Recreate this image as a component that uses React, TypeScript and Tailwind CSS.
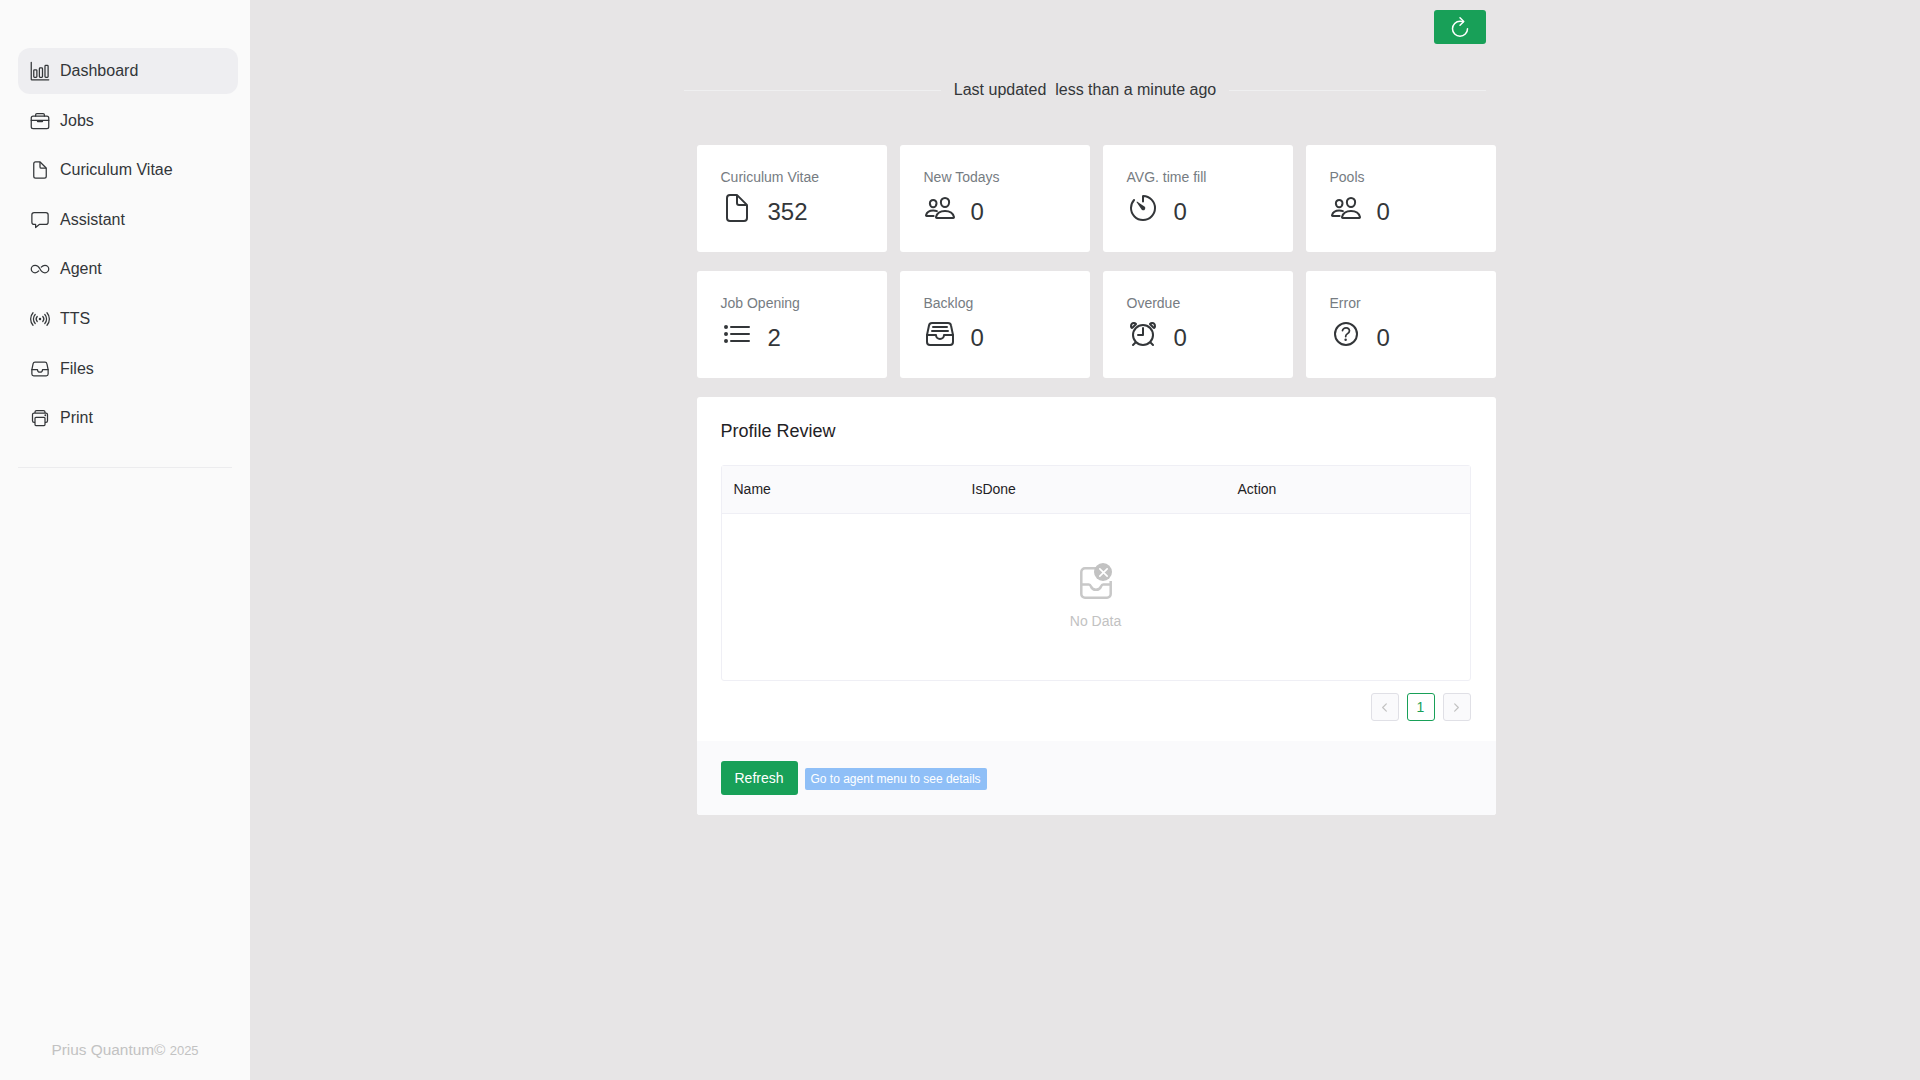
import React from "react";
import {
  IoBarChartOutline,
  IoBriefcaseOutline,
  IoDocumentOutline,
  IoChatboxOutline,
  IoInfiniteOutline,
  IoRadioOutline,
  IoFileTrayOutline,
  IoPrintOutline,
  IoPeopleOutline,
  IoTimerOutline,
  IoListOutline,
  IoFileTrayFullOutline,
  IoAlarmOutline,
  IoHelpCircleOutline,
  IoRefreshOutline,
  IoChevronBackOutline,
  IoChevronForwardOutline,
} from "react-icons/io5";

const nav = [
  { label: "Dashboard", Icon: IoBarChartOutline, active: true },
  { label: "Jobs", Icon: IoBriefcaseOutline },
  { label: "Curiculum Vitae", Icon: IoDocumentOutline },
  { label: "Assistant", Icon: IoChatboxOutline },
  { label: "Agent", Icon: IoInfiniteOutline },
  { label: "TTS", Icon: IoRadioOutline },
  { label: "Files", Icon: IoFileTrayOutline },
  { label: "Print", Icon: IoPrintOutline },
];

const stats = [
  { label: "Curiculum Vitae", value: "352", Icon: IoDocumentOutline },
  { label: "New Todays", value: "0", Icon: IoPeopleOutline },
  { label: "AVG. time fill", value: "0", Icon: IoTimerOutline },
  { label: "Pools", value: "0", Icon: IoPeopleOutline },
  { label: "Job Opening", value: "2", Icon: IoListOutline },
  { label: "Backlog", value: "0", Icon: IoFileTrayFullOutline },
  { label: "Overdue", value: "0", Icon: IoAlarmOutline },
  { label: "Error", value: "0", Icon: IoHelpCircleOutline },
];

export default function App() {
  return (
    <div className="flex h-[1080px] w-full overflow-hidden bg-[#e7e5e6] font-['Liberation_Sans',Arial,sans-serif] text-[#333639]">
      <aside className="flex h-full w-[250px] shrink-0 flex-col bg-[#fafafa] pl-[18px] pr-[12px] pt-[48px]">
        <nav className="flex flex-col gap-[3.6px] pr-0 w-[220px]">
          {nav.map(({ label, Icon, active }) => (
            <div
              key={label}
              className={`flex h-[46px] items-center gap-[10px] rounded-[12px] pl-[12px] text-[16px] ${active ? "bg-[#eeeef1]" : ""}`}
            >
              <Icon className="h-[20px] w-[20px] shrink-0" />
              <span>{label}</span>
            </div>
          ))}
        </nav>
        <div className="mt-[26px] h-px w-[214px] bg-[#ececee]" />
        <div className="mt-auto mb-[17px] -ml-[6px] text-center text-[15.4px] leading-[24px] text-[#c2c2c2]">
          Prius Quantum© <span className="text-[13px]">2025</span>
        </div>
      </aside>

      <main className="flex-1">
        <div className="mx-auto w-[802px]">
          <div className="flex justify-end pt-[10px]">
            <button className="flex h-[34px] w-[52px] items-center justify-center rounded-[3px] bg-[#18a058] text-white">
              <IoRefreshOutline className="h-[24px] w-[24px]" />
            </button>
          </div>
          <div className="mt-[34px] flex h-[24px] items-center">
            <div className="h-px flex-1 bg-[#efeff0]" />
            <div className="px-[13px] text-[16px] whitespace-pre">Last updated  less than a minute ago</div>
            <div className="h-px flex-1 bg-[#efeff0]" />
          </div>

          <div className="ml-[12.5px] mt-[43px] w-[799px]">
            <div className="grid grid-cols-4 gap-x-[13px] gap-y-[19px]">
              {stats.map(({ label, value, Icon }) => (
                <div key={label} className="h-[107px] rounded-[3px] bg-white px-[24px] pt-[22px]">
                  <div className="text-[14px] leading-[20px] text-[#767c82]">{label}</div>
                  <div className="mt-[7px] flex h-[36px] items-center">
                    <Icon className="mb-[8px] h-[32px] w-[32px] shrink-0" />
                    <span className="ml-[15px] text-[24px] leading-[36px]">{value}</span>
                  </div>
                </div>
              ))}
            </div>

            <div className="mt-[19px] rounded-[3px] bg-white">
              <div className="pl-[24px] pr-[25px] pt-[21px]">
                <h2 className="text-[18px] leading-[26px] text-[#1f2225]">Profile Review</h2>
                <div className="mt-[21px] rounded-[3px] border border-[#efeff5]">
                  <div className="grid h-[48px] grid-cols-[238px_266px_1fr] items-center border-b border-[#efeff5] bg-[#fafafc] px-[12px] text-[14px] text-[#1f2225]">
                    <span>Name</span>
                    <span>IsDone</span>
                    <span>Action</span>
                  </div>
                  <div className="flex h-[166px] flex-col items-center pt-[53px]">
                    <div className="relative h-[32px] w-[32px]">
                      <svg viewBox="0 0 32 32" className="h-[32px] w-[32px]" fill="none" stroke="#c8c8c8" strokeWidth="2.5">
                        <path d="M17 1.300H5a3.700 3.700 0 0 0-3.700 3.700v22a3.700 3.700 0 0 0 3.700 3.700h22a3.700 3.700 0 0 0 3.700-3.700V14" />
                        <path d="M1.300 17.500h7.500c1.200 0 1.700 0.800 2.200 2 0.700 2 2.400 3.300 5 3.300s4.300-1.300 5-3.300c0.500-1.200 1-2 2.200-2h7.500" />
                      </svg>
                      <div className="absolute left-[14.500px] top-[-4px] flex h-[18px] w-[18px] items-center justify-center rounded-full bg-[#c2c2c2]">
                        <svg viewBox="0 0 12 12" className="h-[11px] w-[11px]" stroke="#fff" strokeWidth="1.800" strokeLinecap="round">
                          <path d="M2 2l8 8M10 2l-8 8" />
                        </svg>
                      </div>
                    </div>
                    <div className="mt-[12px] text-[14px] leading-[20px] text-[#c2c2c2]">No Data</div>
                  </div>
                </div>
                <div className="flex justify-end gap-[8px] pt-[12px] pb-[20px]">
                  <div className="flex h-[28px] w-[28px] items-center justify-center rounded-[3px] border border-[#e0e0e6] bg-[#fafafc] text-[#c2c2c2]">
                    <IoChevronBackOutline className="h-[13px] w-[13px]" />
                  </div>
                  <div className="flex h-[28px] w-[28px] items-center justify-center rounded-[3px] border border-[#18a058] text-[14px] text-[#18a058]">1</div>
                  <div className="flex h-[28px] w-[28px] items-center justify-center rounded-[3px] border border-[#e0e0e6] bg-[#fafafc] text-[#c2c2c2]">
                    <IoChevronForwardOutline className="h-[13px] w-[13px]" />
                  </div>
                </div>
              </div>
              <div className="flex h-[74px] items-center gap-[7px] rounded-b-[3px] bg-[#fafafc] px-[24px]">
                <button className="h-[34px] w-[77px] rounded-[3px] bg-[#18a058] text-[14px] text-white">Refresh</button>
                <span className="mt-[2px] flex h-[22px] items-center rounded-[2px] bg-[#8fbff7] px-[6px] text-[12px] text-white">Go to agent menu to see details</span>
              </div>
            </div>
          </div>
        </div>
      </main>
    </div>
  );
}
